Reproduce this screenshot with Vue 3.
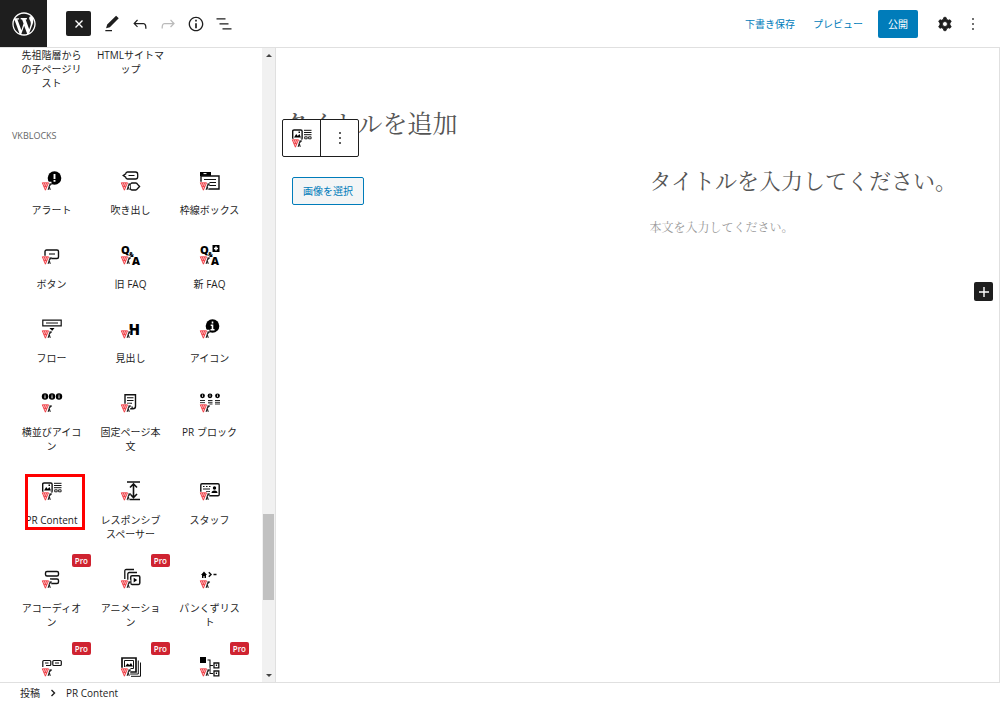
<script setup>
import { ref } from 'vue'

const logo = 'M20 10c0-5.51-4.49-10-10-10C4.48 0 0 4.49 0 10c0 5.52 4.48 10 10 10 5.51 0 10-4.48 10-10zM7.78 15.37L4.37 6.22c.55-.02 1.17-.08 1.17-.08.5-.06.44-1.13-.06-1.11 0 0-1.45.11-2.37.11-.18 0-.37 0-.58-.01C4.12 2.69 6.87 1.11 10 1.11c2.33 0 4.45.87 6.05 2.34-.68-.11-1.65.39-1.65 1.58 0 .74.45 1.36.9 2.1.35.61.55 1.36.55 2.46 0 1.49-1.4 5-1.4 5l-3.03-8.37c.54-.02.82-.17.82-.17.5-.05.44-1.25-.06-1.22 0 0-1.44.12-2.38.12-.87 0-2.33-.12-2.33-.12-.5-.03-.56 1.2-.06 1.22l.92.08 1.26 3.41zM17.41 10c.24-.64.74-1.87.43-4.25.7 1.29 1.05 2.71 1.05 4.25 0 3.29-1.73 6.24-4.4 7.78.97-2.59 1.94-5.2 2.92-7.78zM6.1 18.09C3.12 16.65 1.11 13.53 1.11 10c0-1.3.23-2.48.72-3.59C3.25 10.3 4.67 14.2 6.1 18.09zm4.03-6.63l2.58 6.98c-.86.29-1.76.45-2.71.45-.79 0-1.57-.11-2.29-.33.81-2.38 1.62-4.74 2.42-7.1z'
const dots = 'M13 19h-2v-2h2v2zm0-6h-2v-2h2v2zm0-6h-2V5h2v2z'
const cog = 'M10.289 4.836A1 1 0 0111.275 4h1.306a1 1 0 01.987.836l.244 1.466c.787.26 1.503.679 2.108 1.218l1.393-.522a1 1 0 011.216.437l.653 1.13a1 1 0 01-.23 1.273l-1.148.944a6.025 6.025 0 010 2.435l1.149.946a1 1 0 01.23 1.272l-.653 1.13a1 1 0 01-1.216.437l-1.394-.522c-.605.54-1.32.958-2.108 1.218l-.244 1.466a1 1 0 01-.987.836h-1.306a1 1 0 01-.986-.836l-.244-1.466a5.995 5.995 0 01-2.108-1.218l-1.394.522a1 1 0 01-1.217-.436l-.653-1.131a1 1 0 01.23-1.272l1.149-.946a6.026 6.026 0 010-2.435l-1.148-.944a1 1 0 01-.23-1.272l.653-1.131a1 1 0 011.217-.437l1.393.522a5.994 5.994 0 012.108-1.218l.244-1.466zM14.929 12a3 3 0 11-6 0 3 3 0 016 0z'

const tools = [
  { name: 'ツール', d: 'M20.1 5.1L16.9 2 6.2 12.7l-1.3 4.4 4.5-1.3L20.1 5.1zM4 20.8h8v-1.5H4v1.5z' },
  { name: '元に戻す', d: 'M18.3 11.7c-.6-.6-1.4-.9-2.3-.9H6.7l2.9-3.3-1.1-1-4.5 5L8.5 16l1-1-2.7-2.7H16c.5 0 .9.2 1.3.5 1 1 1 3.4 1 4.5v.3h1.5v-.2c0-1.5 0-4.3-1.5-5.7z' },
  { name: 'やり直し', disabled: true, d: 'M15.6 6.5l-1.1 1 2.9 3.3H8c-.9 0-1.7.3-2.3.9-1.4 1.5-1.4 4.2-1.4 5.6v.2h1.5v-.3c0-1.1 0-3.5 1-4.5.3-.3.7-.5 1.3-.5h9.2L14.5 15l1.1 1.1 4.6-4.6-4.6-5z' },
  { name: '詳細', d: 'M12 3.2c-4.8 0-8.8 3.9-8.8 8.8 0 4.8 3.9 8.8 8.8 8.8 4.8 0 8.8-3.9 8.8-8.8 0-4.8-4-8.8-8.8-8.8zm0 16c-4 0-7.2-3.3-7.2-7.2C4.8 8 8 4.8 12 4.8s7.2 3.3 7.2 7.2c0 4-3.2 7.2-7.2 7.2zM11 17h2v-6h-2v6zm0-8h2V7h-2v2z' },
  { name: 'リスト表示', d: 'M13.8 5.2H3v1.5h10.8V5.2zm-3.6 12v1.5H21v-1.5H10.2zm7.2-6H6.6v1.5h10.8v-1.5z' }
]

// Red V and dark k in the lower left corner of every VK block icon
const mark = `<path d="M0 10.800h9.500l-.5 8.700H1z" fill="#fff"/>
<g fill="none"><path d="M.3 11.800h6.200L3.400 19.200z" fill="#fbd5d7" stroke="#ee1c25" stroke-width=".8"/>
<path d="M2.300 12l1.100 3.500 1.200-3.500M1.900 15.700h3" stroke="#ee1c25" stroke-width=".7"/>
<path d="M8.300 12.200l-2.200 6.600M9.800 12.600l-2.700 2.600 1.200 3.600" stroke="#222" stroke-width="1.100"/></g>`

const stroke = (d, w = 1.3, fill = 'none') =>
  `<path d="${d}" fill="${fill}" stroke="#111" stroke-width="${w}"/>`
const solid = (d) => `<path d="${d}"/>`
const letter = (t, x, y, s) =>
  `<text x="${x}" y="${y}" font-family="Open Sans, sans-serif" font-weight="800" font-size="${s}">${t}</text>`
const questionAnswer = `<text font-family="Open Sans, sans-serif" font-weight="800" font-size="11"><tspan x="0" y="8.600">Q</tspan><tspan x="8" y="12" font-size="6">&amp;</tspan><tspan x="11" y="19.500">A</tspan></text>`
const infoDot = (x) =>
  `<circle cx="${x}" cy="3.500" r="3.200"/><path d="M${x} 1.700v1M${x} 3.100v2.200" stroke="#fff" stroke-width="1"/>`

const icons = {
  alert: `<circle cx="12.500" cy="7" r="6.800"/><path d="M12.500 3v5M12.500 9v1.800" stroke="#fff" stroke-width="1.900"/>`,
  balloon: stroke('M6.500 1h8a2.200 2.200 0 0 1 2.200 2.200v2.600A2.200 2.200 0 0 1 14.500 8h-8a2 2 0 0 1-1.800-1.800L2.200 4.500l2.500-1.700A2 2 0 0 1 6.500 1zM11 12h3.800a1.700 1.700 0 0 1 1.600 1.200l2.200 2.300-2.200 2.200A1.700 1.700 0 0 1 14.800 19H11a1.700 1.700 0 0 1-1.700-1.700v-3.600A1.700 1.700 0 0 1 11 12z') + stroke('M7.500 4.500h6', 1),
  box: solid('M0 1h11v4H0z') + stroke('M1 5h18v13H8M1 5v6', 1.4) + stroke('M4 8.500h12M8 11.500h8M9 14.500h7', 1) + '<path d="M3.500 2.600h3" stroke="#fff" stroke-width="1"/>',
  button: stroke('M3 11V6.500a1.500 1.500 0 0 1 1.500-1.500h10.500a1.500 1.500 0 0 1 1.500 1.500v5.500a1.500 1.500 0 0 1-1.500 1.500H9', 1.4) + stroke('M7 9h6', 1.1),
  faq: questionAnswer,
  newfaq: questionAnswer + solid('M12.500 0h7v7h-7z') + '<path d="M16 1.500v4M14 3.500h4" stroke="#fff" stroke-width="1.600"/>',
  flow: stroke('M.8 1.200h18.400v5.600H.8z', 1.2) + stroke('M4 4h12', 1) + solid('M7.500 9h5l-2.500 3z'),
  heading: letter('H', 7.600, 15.500, 15),
  icon: `<circle cx="12.500" cy="7" r="6.800"/><path d="M12.500 2.500v2M10.700 6.200h1.800v4.300M10.500 10.700h4" stroke="#fff" fill="none" stroke-width="1.600"/>`,
  icons: infoDot(3) + infoDot(10) + infoDot(17),
  page: stroke('M4 11V1.700h10.500v11.500q0 2.500-2.500 2.500H9M12 15.700q-1 0-1-2.200', 1.4) + stroke('M6 4.700h6.500M6 7.500h6.500M6 10.300h5', 1.1),
  pr: '<circle cx="2.500" cy="2.800" r="2.400"/><circle cx="10" cy="2.800" r="2.400"/><circle cx="17.500" cy="2.800" r="2.400"/><path d="M2.500 1.500v2.500M10 1.500v2.500M17.500 1.500v2.500" stroke="#fff" stroke-width=".7"/>' + stroke('M0 7.500h5M0 9.700h5M8 7.500h4.500M8 9.300h4.500M8 11h4.500M15 7.500h5M15 9.300h5M15 11h5', .9),
  content: stroke('M2 11.500q-1.300 0-1.300-1.300V3.200Q.7 2 2 2h6.800q1.300 0 1.300 1.200v7q0 1.300-1.300 1.300H8', 1.4) + solid('M2 9.500l2.200-3.500 1.600 2 1.600-2 1.600 3.500zM6.500 3.500h1.500v1.500h-1.500z') + stroke('M12 2.300h7.500M12 4.500h7.500M12 6.700h7.500', 1) + stroke('M12.700 8.800h2.500v2h-2.500zM16.600 8.800h2.500v2h-2.500z', .9),
  spacer: stroke('M6 1h13M6 18.500h13M12.500 3.500v12.500M9 6.500l3.500-3.500L16 6.500M9 13l3.500 3.500L16 13', 1.6),
  staff: stroke('M.8 11V4q0-1.200 1.200-1.200h16q1.200 0 1.200 1.200v9.500q0 1.200-1.200 1.200H9', 1.4) + stroke('M3 5.500h1.500M6 5.500h1.500M9 5.500h1.500M3 8h7M6 10.500h4', 1) + '<circle cx="14.500" cy="7" r="1.700"/>' + solid('M11.500 12q0-2.500 3-2.500t3 2.500z'),
  accordion: stroke('M5 2.500h10q1.500 0 1.500 1.500v1.500q0 1.500-1.500 1.500H5Q3.500 7 3.500 5.500V4Q3.500 2.500 5 2.500zM8 10h7q1.500 0 1.500 1.500v1.500q0 1.500-1.500 1.500H8', 1.4),
  animation: stroke('M3.800 10V2q0-1.500 1.500-1.500H13M6.800 13V5q0-1.500 1.500-1.500H16', 1.3) + stroke('M11 6.800h6.500q1.300 0 1.300 1.300v6q0 1.300-1.300 1.300H11q-1.300 0-1.300-1.300v-6q0-1.300 1.300-1.300z', 1.5) + solid('M12.700 8.700l3.500 2.400-3.500 2.400z'),
  bread: solid('M1 6l3-3.500L7 6H6v3H4.500V7H3.500v2H2V6z') + stroke('M8.800 3.300l2.200 2.200-2.200 2.200M13.500 5.500h3', 1.5),
  buttons: stroke('M.8 10V4.500q0-1 1-1h6q1 0 1 1v3q0 1-1 1H4M11.800 3.500h6.500q1 0 1 1v3q0 1-1 1h-6.500q-1 0-1-1v-3q0-1 1-1z', 1.2) + stroke('M3 6h3.500M13 6h4', 1),
  slider: stroke('M1 11V1h14v14H8', 1.7) + stroke('M3.500 10V3.500h9v8H6', 1) + solid('M4 9.500l2.500-3 1.800 1.500 1.700-2 2 3.500z') + stroke('M17.300 3.500v13.500H8M19.500 5.500v13.800H10', 1),
  tree: solid('M0 0h6v6H0z') + stroke('M7.500 3h2.500v13.500h3M10 8.500h3', 1.1) + stroke('M14 6h4.800v4.800h-4.800zM14 14h4.800v4.800h-4.800z', 1.3) + solid('M15.800 7.600h1.300v1.300h-1.300zM15.800 15.600h1.300v1.300h-1.300z')
}

const blocks = [
  { label: 'アラート', icon: 'alert' },
  { label: '吹き出し', icon: 'balloon' },
  { label: '枠線ボックス', icon: 'box' },
  { label: 'ボタン', icon: 'button' },
  { label: '旧 FAQ', icon: 'faq' },
  { label: '新 FAQ', icon: 'newfaq' },
  { label: 'フロー', icon: 'flow' },
  { label: '見出し', icon: 'heading' },
  { label: 'アイコン', icon: 'icon' },
  { label: '横並びアイコン', icon: 'icons' },
  { label: '固定ページ本文', icon: 'page' },
  { label: 'PR ブロック', icon: 'pr' },
  { label: 'PR Content', icon: 'content', marked: true },
  { label: 'レスポンシブスペーサー', icon: 'spacer' },
  { label: 'スタッフ', icon: 'staff' },
  { label: 'アコーディオン', icon: 'accordion', pro: true },
  { label: 'アニメーション', icon: 'animation', pro: true },
  { label: 'パンくずリスト', icon: 'bread' },
  { label: '', icon: 'buttons', pro: true },
  { label: '', icon: 'slider', pro: true },
  { label: '', icon: 'tree', pro: true }
]

const title = ref('')
const heading = ref('')
const body = ref('')
</script>

<template>
  <div class="editor">
    <header class="topbar">
      <a class="home" href="#" aria-label="投稿一覧">
        <svg viewBox="-2 -2 24 24" width="28" height="28"><path :d="logo" /></svg>
      </a>
      <button class="close" type="button" aria-label="ブロック挿入ツールを閉じる">
        <svg viewBox="0 0 10 10" width="10" height="10"><path d="M1.500 1.500l7 7M8.500 1.500l-7 7" /></svg>
      </button>
      <div class="tools">
        <button v-for="t in tools" :key="t.name" class="tool" type="button" :aria-label="t.name" :disabled="t.disabled">
          <svg viewBox="0 0 24 24" width="20" height="20"><path :d="t.d" /></svg>
        </button>
      </div>
      <div class="actions">
        <button class="text-btn" type="button">下書き保存</button>
        <button class="text-btn" type="button">プレビュー</button>
        <button class="publish" type="button">公開</button>
        <div class="tools">
          <button class="tool" type="button" aria-label="設定">
            <svg viewBox="0 0 24 24" width="20" height="20"><path :d="cog" fill-rule="evenodd" stroke="#1e1e1e" /></svg>
          </button>
          <button class="tool" type="button" aria-label="オプション">
            <svg viewBox="0 0 24 24" width="20" height="20"><path :d="dots" /></svg>
          </button>
        </div>
      </div>
    </header>

    <div class="main">
      <aside class="inserter">
        <div class="list">
          <div class="grid previous">
            <button class="plain" type="button">先祖階層からの子ページリスト</button>
            <button class="plain" type="button">HTMLサイトマップ</button>
          </div>
          <h2>VKBLOCKS</h2>
          <div class="grid">
            <button v-for="b in blocks" :key="b.icon" class="block" type="button" :aria-label="b.label || b.icon">
              <svg viewBox="-2 -2 24 24" width="24" height="24" v-html="icons[b.icon] + mark"></svg>
              <span class="label">{{ b.label }}</span>
              <span v-if="b.pro" class="pro">Pro</span>
              <span v-if="b.marked" class="frame"></span>
            </button>
          </div>
        </div>
        <div class="scroll" aria-hidden="true">
          <i class="up"></i>
          <div class="track"><div class="thumb"></div></div>
          <i class="down"></i>
        </div>
      </aside>

      <main class="canvas">
        <div class="title-row">
          <input v-model="title" class="title" type="text" placeholder="タイトルを追加" aria-label="タイトルを追加" />
          <div class="block-bar">
            <button type="button" aria-label="PR Content">
              <svg viewBox="-2 -2 24 24" width="24" height="24" v-html="icons.content + mark"></svg>
            </button>
            <button type="button" aria-label="ブロックのオプション">
              <svg viewBox="0 0 24 24" width="20" height="20"><path :d="dots" /></svg>
            </button>
          </div>
        </div>
        <section class="pr">
          <div>
            <button class="pick" type="button">画像を選択</button>
          </div>
          <div class="words">
            <input v-model="heading" class="heading" type="text" placeholder="タイトルを入力してください。" aria-label="見出し" />
            <input v-model="body" class="body" type="text" placeholder="本文を入力してください。" aria-label="本文" />
          </div>
        </section>
        <button class="add" type="button" aria-label="ブロックを追加">
          <svg viewBox="0 0 12 12" width="12" height="12"><path d="M6 1v10M1 6h10" /></svg>
        </button>
      </main>
    </div>

    <footer class="crumbs">
      <a href="#">投稿</a>
      <svg viewBox="0 0 6 8" width="6" height="8"><path d="M1.500 1l3 3-3 3" /></svg>
      <span>PR Content</span>
    </footer>
  </div>
</template>

<style>
body {
  margin: 0;
  background: #fff;
}
</style>

<style scoped>
.editor {
  display: flex;
  flex-direction: column;
  height: 100vh;
  overflow: hidden;
  background: #fff;
  color: #1e1e1e;
  font: 10px/14px "Open Sans", "Noto Sans CJK JP", sans-serif;
}
.editor * {
  box-sizing: border-box;
}
button,
input {
  margin: 0;
  padding: 0;
  border: 0;
  background: none;
  color: inherit;
  font: inherit;
}
button {
  cursor: pointer;
}
svg {
  display: block;
}
a {
  color: inherit;
  text-decoration: none;
}

.topbar {
  display: flex;
  align-items: center;
  flex: none;
  height: 48px;
  border-bottom: 1px solid #e0e0e0;
}
.home {
  display: grid;
  place-items: center;
  width: 47px;
  height: 47px;
  background: #1e1e1e;
  fill: #fff;
}
.close {
  display: grid;
  place-items: center;
  width: 25px;
  height: 25px;
  margin: 0 7px 0 19px;
  border-radius: 2px;
  background: #1e1e1e;
}
.close path,
.add path {
  fill: none;
  stroke: #fff;
  stroke-width: 1.4;
}
.tools {
  display: flex;
}
.tool {
  display: grid;
  place-items: center;
  width: 28px;
  height: 28px;
}
.tool svg {
  fill: #1e1e1e;
}
.tool:disabled {
  opacity: 0.3;
}
.actions {
  display: flex;
  align-items: center;
  margin-left: auto;
  padding-right: 13px;
}
.text-btn {
  margin-right: 18px;
  color: #007cba;
}
.text-btn + .text-btn {
  margin-right: 15px;
}
.publish {
  height: 28px;
  margin-right: 13px;
  padding: 0 10px;
  border-radius: 2px;
  background: #007cba;
  color: #fff;
}

.main {
  display: flex;
  flex: 1;
  min-height: 0;
}
.inserter {
  display: flex;
  flex: none;
  border-right: 1px solid #e0e0e0;
}
.list {
  width: 262px;
  overflow: hidden;
  line-break: loose;
}
.grid {
  display: grid;
  grid-template-columns: repeat(3, 79px);
  padding-left: 12px;
}
.plain {
  align-self: start;
  padding: 0 5px;
}
h2 {
  margin: 39px 0 14px;
  padding-left: 12px;
  color: #666;
  font-size: 9px;
  line-height: 14px;
  font-weight: 400;
}
.block {
  position: relative;
  display: flex;
  flex-direction: column;
  align-items: center;
  gap: 10px;
  padding: 12px 8px 14px;
}
.label {
  min-height: 14px;
}
.pro {
  position: absolute;
  top: -1px;
  right: 0;
  padding: 0 3px;
  border-radius: 2px;
  background: #cf2331;
  color: #fff;
  font-size: 8px;
  line-height: 13px;
  font-weight: 600;
}
.frame {
  position: absolute;
  top: 7px;
  left: 13px;
  width: 60px;
  height: 56px;
  border: 3px solid #f00;
}
.scroll {
  display: flex;
  flex-direction: column;
  align-items: center;
  width: 13px;
  padding: 6px 0 5px;
  background: #f1f1f1;
}
.up,
.down {
  border: 3px solid transparent;
}
.up {
  border-top: 0;
  border-bottom-color: #444;
}
.down {
  border-bottom: 0;
  border-top-color: #444;
}
.track {
  display: flex;
  flex-direction: column;
  justify-content: flex-end;
  flex: 1;
  width: 11px;
  padding-bottom: 74px;
}
.thumb {
  height: 86px;
  background: #c1c1c1;
}

.canvas {
  flex: 1;
  min-width: 0;
  padding: 56px 6px 0 7px;
  border-right: 1px solid #e0e0e0;
  font-family: "Noto Serif CJK JP", "Noto Serif JP", "Noto Sans CJK JP", serif;
}
.title-row {
  position: relative;
}
.canvas input {
  display: block;
  width: 100%;
  font-weight: 400;
}
.canvas .title {
  height: 36px;
  font-size: 25px;
  line-height: 36px;
}
.canvas input::placeholder {
  color: #555;
  opacity: 1;
}
.block-bar {
  position: absolute;
  top: 15px;
  left: -1px;
  display: flex;
  border: 1px solid #1e1e1e;
  border-radius: 2px;
  background: #fff;
}
.block-bar button {
  display: grid;
  place-items: center;
  width: 37px;
  height: 36px;
}
.block-bar button + button {
  width: 38px;
  border-left: 1px solid #1e1e1e;
}
.pr {
  display: grid;
  grid-template-columns: 1fr 1fr;
  margin-top: 22px;
  padding-left: 9px;
}
.pick {
  height: 28px;
  margin-top: 15px;
  padding: 0 10px;
  border: 1px solid #007cba;
  border-radius: 2px;
  background: #f3f5f6;
  color: #007cba;
  font-family: "Open Sans", "Noto Sans CJK JP", sans-serif;
}
.words {
  padding-left: 7px;
}
.canvas .heading {
  height: 36px;
  font-size: 22px;
  line-height: 36px;
}
.canvas .body {
  height: 20px;
  margin-top: 19px;
  font-size: 12px;
  line-height: 20px;
}
.canvas .body::placeholder {
  color: #999;
}
.add {
  display: grid;
  place-items: center;
  width: 19px;
  height: 19px;
  margin: 45px 0 0 auto;
  border-radius: 2px;
  background: #1e1e1e;
}

.crumbs {
  display: flex;
  align-items: center;
  gap: 10px;
  flex: none;
  height: 45px;
  padding: 0 20px 24px;
  border-top: 1px solid #e0e0e0;
}
.crumbs path {
  fill: none;
  stroke: #1e1e1e;
  stroke-width: 1.4;
}
</style>
